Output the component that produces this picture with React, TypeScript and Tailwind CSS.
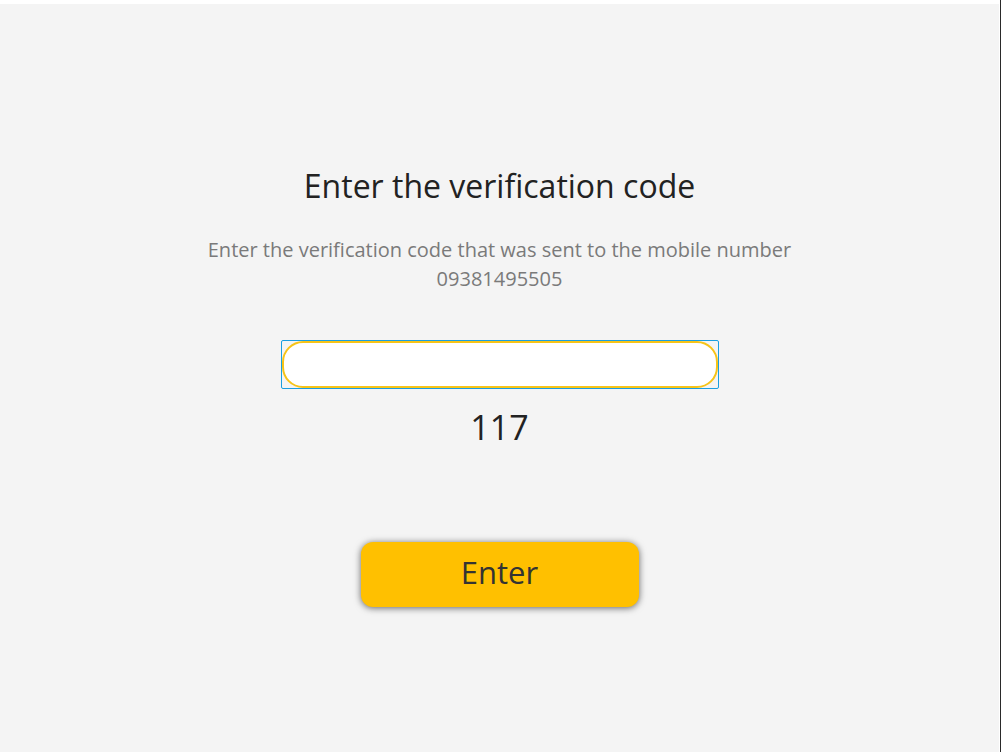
import React, { useState } from 'react';

const App: React.FC = () => {
    const [code, setCode] = useState('');

    return (
        <div className="w-[1001px] h-[752px] bg-white pt-[4px] border-r border-[#2a2a2a] flex" style={{ fontFamily: '"Open Sans", "Noto Sans", sans-serif' }}>
            <div className="flex-1 mr-[1px] bg-[#f4f4f4] flex flex-col items-center">
                {/* Heading */}
                <h1 className="mt-[161px] text-[32px] leading-[42px] text-[#222222]">
                    Enter the verification code
                </h1>
                <p className="mt-[28px] w-[620px] text-center text-[20px] leading-[29px] text-[#7a7a7a]">
                    Enter the verification code that was sent to the mobile number 09381495505
                </p>

                {/* Code field */}
                <div className="mt-[47px] w-[438px] h-[49px] border border-[#1a9ee0] rounded-[2px] flex">
                    <input
                        value={code}
                        onChange={(e) => setCode(e.target.value)}
                        className="flex-1 bg-white border-2 border-[#f7c418] rounded-[21px] outline-none px-5 text-[18px]"
                    />
                </div>

                {/* Countdown */}
                <div className="mt-[18px] text-[34px] leading-[40px] text-[#222222]">117</div>

                <button className="mt-[95px] w-[278px] h-[65px] pb-[4px] rounded-[12px] bg-[#ffc000] shadow-[0_1px_7px_rgba(0,0,0,0.6)] text-[31px] text-[#333333]">
                    Enter
                </button>
            </div>
        </div>
    );
};

export default App;
